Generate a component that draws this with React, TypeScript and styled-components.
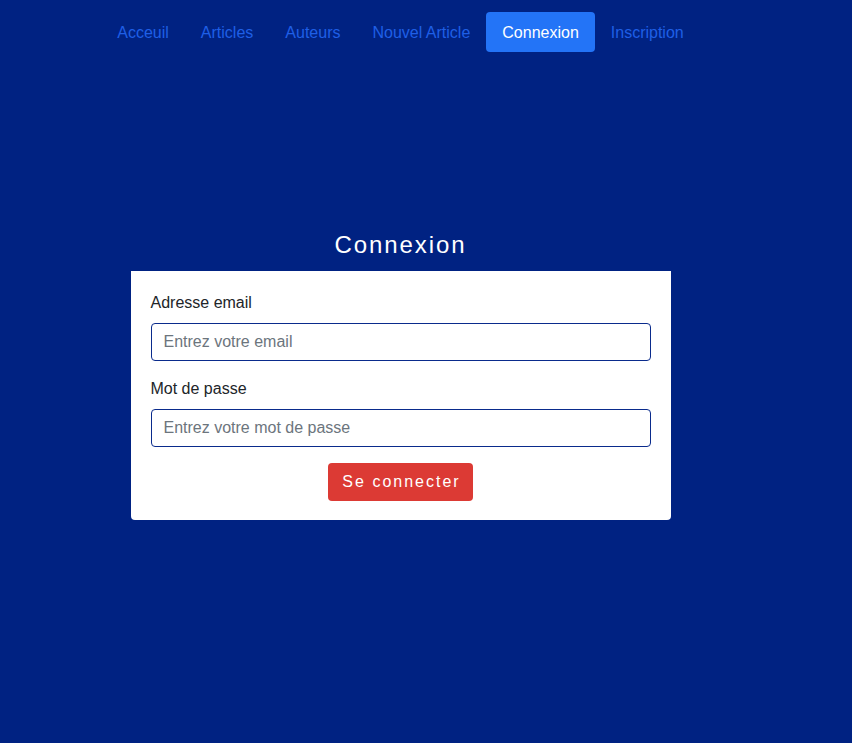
import React from "react";
import styled, { createGlobalStyle } from "styled-components";

const Global = createGlobalStyle`
  html, body { margin: 0; padding: 0; background: #002282; }
  body { font-family: "Liberation Sans", Arial, Helvetica, sans-serif; min-height: 743px; }
  * { box-sizing: border-box; }
`;

const Container = styled.div`
  width: 801px;
  display: flex;
  flex-direction: column;
  align-items: center;
  padding-top: 12px;
`;

const Nav = styled.nav`
  display: flex;
  align-items: center;
`;

const NavLink = styled.a<{ $active?: boolean }>`
  display: flex;
  align-items: center;
  height: 40px;
  padding: 1px 16px 0;
  font-size: 16px;
  text-decoration: none;
  border-radius: 4px;
  color: ${(p) => (p.$active ? "#ffffff" : "#1f5fe6")};
  background: ${(p) => (p.$active ? "#2374f7" : "transparent")};
`;

const Card = styled.div`
  margin-top: 166px;
  width: 540px;
  display: flex;
  flex-direction: column;
`;

const CardHeader = styled.div`
  height: 53px;
  display: flex;
  align-items: center;
  justify-content: center;
  background: #002282;
`;

const Title = styled.h2`
  margin: 0;
  font-size: 24px;
  font-weight: 400;
  letter-spacing: 1.9px;
  color: #ffffff;
`;

const CardBody = styled.form`
  background: #ffffff;
  border-radius: 0 0 4px 4px;
  padding: 20px 20px 19px;
  display: flex;
  flex-direction: column;
`;

const Group = styled.div`
  display: flex;
  flex-direction: column;
  margin-bottom: 16px;
`;

const Label = styled.label`
  font-size: 16px;
  line-height: 24px;
  color: #212529;
  margin-bottom: 8px;
`;

const Input = styled.input`
  height: 38px;
  border: 1px solid #0a2b8c;
  border-radius: 4px;
  padding: 0 12px;
  font-family: inherit;
  font-size: 16px;
  color: #212529;
  outline: none;
  &::placeholder { color: #6c757d; }
`;

const Button = styled.button`
  align-self: center;
  height: 38px;
  padding: 0 12px 0 14px;
  border: none;
  border-radius: 4px;
  background: #dc3a34;
  color: #ffffff;
  font-family: inherit;
  font-size: 16px;
  letter-spacing: 2px;
  cursor: pointer;
`;

const links = ["Acceuil", "Articles", "Auteurs", "Nouvel Article", "Connexion", "Inscription"];

export default function App() {
  return (
    <>
      <Global />
      <Container>
        <Nav>
          {links.map((l) => (
            <NavLink key={l} href="#" $active={l === "Connexion"}>
              {l}
            </NavLink>
          ))}
        </Nav>
        <Card>
          <CardHeader>
            <Title>Connexion</Title>
          </CardHeader>
          <CardBody onSubmit={(e) => e.preventDefault()}>
            <Group>
              <Label>Adresse email</Label>
              <Input type="email" placeholder="Entrez votre email" />
            </Group>
            <Group>
              <Label>Mot de passe</Label>
              <Input type="password" placeholder="Entrez votre mot de passe" />
            </Group>
            <Button type="submit">Se connecter</Button>
          </CardBody>
        </Card>
      </Container>
    </>
  );
}
